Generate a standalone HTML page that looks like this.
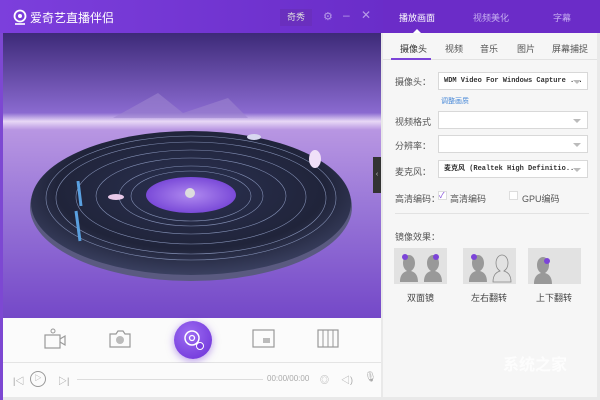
<!DOCTYPE html>
<html><head><meta charset="utf-8"><style>
*{margin:0;padding:0;box-sizing:border-box}
body{width:600px;height:400px;overflow:hidden;background:#e9e9e9;font-family:"Liberation Sans","Noto Sans CJK SC",sans-serif;font-size:9px;color:#444;position:relative}
.abs{position:absolute}
.title{left:0;top:0;width:383px;height:33px;background:linear-gradient(90deg,#7c3fdc,#6a2dc9);color:#fff}
.rtitle{left:383px;top:0;width:217px;height:33px;background:#6b2cc8;color:#fff}
.rp{left:383px;top:33px;width:214px;height:364px;background:#f6f6f6}
.sel{position:absolute;left:55px;width:150px;height:18px;background:#fff;border:1px solid #d8d8d8;font-family:"Liberation Mono","Noto Sans CJK SC",monospace;font-size:7px;font-weight:bold;line-height:16px;padding-left:5px;color:#333}
.sel:after{content:"";position:absolute;right:6px;top:7px;border:4px solid transparent;border-top:4px solid #bbb;border-bottom:0}
.lab{position:absolute;left:12px;font-size:9px;color:#555}
.ctrl{left:3px;top:318px;width:378px;height:45px;background:#fbfbfb;border-bottom:1px solid #e4e4e4}
.play{left:3px;top:363px;width:378px;height:34px;background:#fbfbfb}
.mi{position:absolute;top:215px;width:53px;height:36px;background:#e2e2e2}
</style></head><body>
<div class="abs title">
<svg class="abs" style="left:13px;top:9px" width="14" height="16" viewBox="0 0 14 16"><circle cx="7" cy="7" r="5.5" fill="none" stroke="#fff" stroke-width="1.8"/><circle cx="7" cy="7" r="2" fill="#fff"/><path d="M2 15h10" stroke="#fff" stroke-width="1.6"/></svg>
<div class="abs" style="left:30px;top:9px;font-size:12px">爱奇艺直播伴侣</div>
<div class="abs" style="left:280px;top:9px;width:32px;height:17px;background:#6a2fbe;font-size:9px;text-align:center;line-height:17px;color:#ddd">奇秀</div>
<div class="abs" style="left:323px;top:10px;color:#b79be8;font-size:11px">⚙</div>
<div class="abs" style="left:343px;top:8px;color:#b79be8;font-size:12px">–</div>
<div class="abs" style="left:361px;top:8px;color:#b79be8;font-size:12px">✕</div>
</div>
<div class="abs rtitle">
<div class="abs" style="left:16px;top:11px;font-size:9px">播放画面</div>
<div class="abs" style="left:90px;top:11px;font-size:9px;color:#c6aef0">视频美化</div>
<div class="abs" style="left:170px;top:11px;font-size:9px;color:#c6aef0">字幕</div>
<div class="abs" style="left:30px;top:29px;border:4px solid transparent;border-bottom:4px solid #fff;border-top:0"></div>
</div>
<div class="abs" style="left:0;top:33px;width:3px;height:367px;background:#7d48d2"></div>
<svg class="abs" style="left:3px;top:33px" width="378" height="285" viewBox="0 0 378 285">
<defs>
<linearGradient id="sky" x1="0" y1="0" x2="0" y2="1"><stop offset="0" stop-color="#3d2a78"/><stop offset=".28" stop-color="#8a6ad0"/><stop offset=".31" stop-color="#e8d8f6"/><stop offset=".34" stop-color="#b896e2"/><stop offset=".6" stop-color="#9a78d8"/><stop offset="1" stop-color="#7448c8"/></linearGradient>
<radialGradient id="disc" cx=".5" cy=".4" r=".6"><stop offset="0" stop-color="#2a3050"/><stop offset=".7" stop-color="#20243a"/><stop offset="1" stop-color="#3a4060"/></radialGradient>
<radialGradient id="hole"><stop offset="0" stop-color="#b08af0"/><stop offset="1" stop-color="#7a4ad8"/></radialGradient>
</defs>
<rect width="378" height="285" fill="url(#sky)"/>
<path d="M110 85 L155 60 L180 80 L225 65 L245 85Z" fill="#9c84cf" opacity=".6"/>
<ellipse cx="188" cy="174" rx="161" ry="74" fill="#5a5a80"/>
<ellipse cx="188" cy="170" rx="160" ry="72" fill="url(#disc)"/>
<g fill="none" stroke="#9aa8d0" stroke-width=".6" opacity=".8">
<ellipse cx="188" cy="165" rx="145" ry="62"/><ellipse cx="188" cy="165" rx="135" ry="56"/><ellipse cx="188" cy="164" rx="115" ry="47"/><ellipse cx="188" cy="163" rx="95" ry="38"/><ellipse cx="188" cy="163" rx="72" ry="30"/><ellipse cx="188" cy="163" rx="60" ry="25"/>
</g>
<ellipse cx="188" cy="162" rx="45" ry="18" fill="url(#hole)"/>
<circle cx="187" cy="160" r="5" fill="#ddd"/>
<path d="M75 148 l3 25 M73 178 l4 30" stroke="#5aa0e0" stroke-width="3"/>
<ellipse cx="312" cy="126" rx="6" ry="9" fill="#f0e0f8"/>
<ellipse cx="113" cy="164" rx="8" ry="3" fill="#e8c8e8"/>
<ellipse cx="251" cy="104" rx="7" ry="3" fill="#d8d8f0"/>
</svg>
<div class="abs" style="left:373px;top:157px;width:8px;height:36px;background:#333;color:#ccc;font-size:7px;line-height:36px;text-align:center">‹</div>
<div class="abs ctrl">
<svg class="abs" style="left:40px;top:10px" width="24" height="22" viewBox="0 0 24 22"><rect x="2" y="7" width="15" height="13" fill="none" stroke="#999" stroke-width="1.2"/><path d="M17 11l5-3v9l-5-3" fill="none" stroke="#999" stroke-width="1.2"/><circle cx="10" cy="3" r="2" fill="none" stroke="#999"/></svg>
<svg class="abs" style="left:105px;top:11px" width="24" height="20" viewBox="0 0 24 20"><path d="M2 5h6l2-3h5l2 3h5v13H2z" fill="none" stroke="#999" stroke-width="1.2"/><circle cx="12" cy="11" r="4" fill="#bbb"/></svg>
<div class="abs" style="left:171px;top:3px;width:38px;height:38px;border-radius:50%;background:radial-gradient(circle at 40% 35%,#9d6cf2,#6a2fd6);box-shadow:0 2px 8px rgba(120,60,220,.5)"></div>
<svg class="abs" style="left:179px;top:10px" width="24" height="24" viewBox="0 0 24 24"><circle cx="10" cy="10" r="7" fill="none" stroke="#fff" stroke-width="1.5"/><circle cx="10" cy="10" r="2.5" fill="none" stroke="#fff" stroke-width="1.3"/><circle cx="18" cy="18" r="3.5" fill="#7a3ee0" stroke="#fff"/></svg>
<svg class="abs" style="left:248px;top:10px" width="24" height="22" viewBox="0 0 24 22"><rect x="2" y="2" width="21" height="17" fill="none" stroke="#999" stroke-width="1.2"/><rect x="12" y="10" width="7" height="5" fill="#bbb"/></svg>
<svg class="abs" style="left:313px;top:10px" width="24" height="22" viewBox="0 0 24 22"><rect x="2" y="2" width="20" height="17" fill="none" stroke="#999" stroke-width="1.2"/><path d="M7 2v17M12 2v17M17 2v17" stroke="#999"/></svg>
</div>
<div class="abs play">
<div class="abs" style="left:10px;top:11px;color:#999;font-size:9px">|◁</div>
<div class="abs" style="left:27px;top:8px;width:16px;height:16px;border:1px solid #999;border-radius:50%;color:#999;font-size:7px;text-align:center;line-height:14px">▷</div>
<div class="abs" style="left:55px;top:11px;color:#999;font-size:9px">▷|</div>
<div class="abs" style="left:74px;top:16px;width:186px;height:1px;background:#ddd"></div>
<div class="abs" style="left:264px;top:11px;color:#aaa;font-size:8px">00:00/00:00</div>
<div class="abs" style="left:317px;top:10px;color:#aaa;font-size:9px">◎</div>
<div class="abs" style="left:338px;top:10px;color:#aaa;font-size:9px">◁)</div>
<div class="abs" style="left:361px;top:9px;color:#aaa;font-size:10px">🎙</div>
</div>
<div class="abs rp">
<div class="abs" style="left:0;top:0;width:214px;height:27px;border-bottom:1px solid #e2e2e2"></div>
<div class="abs" style="left:17px;top:9px;font-size:9px;color:#333">摄像头</div>
<div class="abs" style="left:62px;top:9px;font-size:9px;color:#555">视频</div>
<div class="abs" style="left:97px;top:9px;font-size:9px;color:#555">音乐</div>
<div class="abs" style="left:134px;top:9px;font-size:9px;color:#555">图片</div>
<div class="abs" style="left:169px;top:9px;font-size:9px;color:#555">屏幕捕捉</div>
<div class="abs" style="left:8px;top:25px;width:40px;height:2px;background:#7c44d8"></div>
<div class="lab" style="top:42px">摄像头：</div>
<div class="sel" style="top:39px">WDM Video For Windows Capture ...</div>
<div class="abs" style="left:58px;top:63px;font-size:7px;color:#4a8ad8">调整画质</div>
<div class="lab" style="top:82px">视频格式</div>
<div class="sel" style="top:78px"></div>
<div class="lab" style="top:106px">分辨率：</div>
<div class="sel" style="top:102px"></div>
<div class="lab" style="top:132px">麦克风：</div>
<div class="sel" style="top:127px">麦克风 (Realtek High Definitio...</div>
<div class="lab" style="top:159px">高清编码：</div>
<div class="abs" style="left:55px;top:158px;width:9px;height:9px;border:1px solid #ddd;background:#fff;color:#7c44d8;font-size:8px;line-height:8px">✓</div>
<div class="abs" style="left:67px;top:159px;font-size:9px;color:#555">高清编码</div>
<div class="abs" style="left:126px;top:158px;width:9px;height:9px;border:1px solid #ddd;background:#fff"></div>
<div class="abs" style="left:139px;top:159px;font-size:9px;color:#555">GPU编码</div>
<div class="abs" style="left:12px;top:180px;width:194px;height:1px;background:#e2e2e2"></div>
<div class="lab" style="top:197px">镜像效果：</div>
<div class="mi" style="left:11px"></div>
<div class="mi" style="left:80px"></div>
<div class="mi" style="left:145px"></div>
<svg class="abs" style="left:11px;top:215px" width="200" height="36" viewBox="0 0 200 36"><g fill="#999"><path d="M6 34c0-8 4-10 7-11-3-2-4-5-4-8 0-5 3-8 6-8s6 3 6 8c0 3-1 6-4 8 3 1 7 3 7 11z"/><path d="M30 34c0-8 4-10 7-11-3-2-4-5-4-8 0-5 3-8 6-8s6 3 6 8c0 3-1 6-4 8 3 1 7 3 7 11z"/><path d="M75 34c0-8 4-10 7-11-3-2-4-5-4-8 0-5 3-8 6-8s6 3 6 8c0 3-1 6-4 8 3 1 7 3 7 11z"/><path d="M140 36c0-8 4-10 7-11-3-2-4-5-4-8 0-5 3-8 6-8s6 3 6 8c0 3-1 6-4 8 3 1 7 3 7 11z"/></g><path d="M99 34c0-8 4-10 7-11-3-2-4-5-4-8 0-5 3-8 6-8s6 3 6 8c0 3-1 6-4 8 3 1 7 3 7 11z" fill="none" stroke="#888" stroke-width=".8"/><g fill="#7c44d8"><circle cx="11" cy="9" r="3"/><circle cx="42" cy="9" r="3"/><circle cx="80" cy="9" r="3"/><circle cx="153" cy="13" r="3"/></g></svg>
<div class="abs" style="left:24px;top:258px;font-size:9px;color:#444">双面镜</div>
<div class="abs" style="left:88px;top:258px;font-size:9px;color:#444">左右翻转</div>
<div class="abs" style="left:153px;top:258px;font-size:9px;color:#444">上下翻转</div>
<div class="abs" style="left:120px;top:318px;font-size:16px;color:#fff;font-weight:bold;opacity:.85">系统之家</div>
</div>
</body></html>
